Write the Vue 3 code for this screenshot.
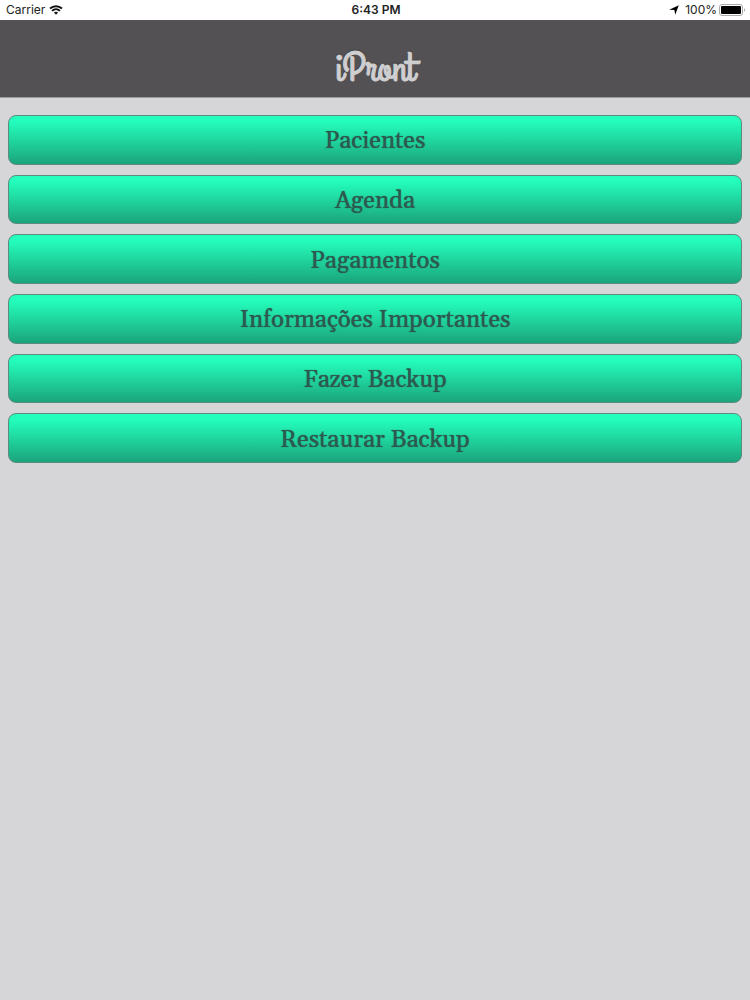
<template>
  <div class="app">
    <div class="status">
      <div class="status-left">
        <span>Carrier</span>
        <svg class="wifi" viewBox="0 0 14 10" aria-hidden="true">
          <path d="M1 3.6C4.4 .4 9.6 .4 13 3.6" />
          <path d="M3.1 5.9C5.3 3.8 8.7 3.8 10.9 5.9" />
          <path class="dot" d="M4.9 7.6C6.1 6.5 7.9 6.5 9.1 7.6L7 9.8Z" />
        </svg>
      </div>
      <span class="time">6:43 PM</span>
      <div class="status-right">
        <svg class="location" viewBox="0 0 10 10" aria-hidden="true">
          <path d="M9.8 .2L6.2 9.8L5.4 5L.2 4.8Z" />
        </svg>
        <span>100%</span>
        <svg class="battery" viewBox="0 0 27 12" aria-hidden="true">
          <rect class="case" x=".5" y=".5" width="23" height="11" rx="2.5" />
          <rect x="2" y="2" width="20" height="8" rx="1" />
          <path class="cap" d="M25 4.2C26.6 4.8 26.6 7.2 25 7.8Z" />
        </svg>
      </div>
    </div>

    <header class="header">
      <h1 class="logo">iPront</h1>
    </header>

    <nav class="menu">
      <button v-for="item in items" :key="item" type="button" class="menu-button">
        {{ item }}
      </button>
    </nav>
  </div>
</template>

<script setup>
import { ref } from 'vue'

const items = ref([
  'Pacientes',
  'Agenda',
  'Pagamentos',
  'Informações Importantes',
  'Fazer Backup',
  'Restaurar Backup'
])
</script>

<style>
body {
  margin: 0;
  background: #d6d5d7;
}
</style>

<style scoped>
.app {
  min-height: 100vh;
  background: #d6d5d7;
}

.status {
  display: grid;
  grid-template-columns: 1fr auto 1fr;
  align-items: center;
  height: 20px;
  padding: 0 4px 0 6px;
  background: #fff;
  color: #222;
  font-family: Inter, "Liberation Sans", sans-serif;
  font-size: 12px;
  line-height: 20px;
}

.status-left,
.status-right {
  display: flex;
  align-items: center;
}

.status-left {
  gap: 4px;
}

.status-right {
  justify-content: flex-end;
  gap: 2px;
}

.time {
  font-weight: 600;
}

.wifi {
  width: 14px;
  height: 10px;
  fill: none;
  stroke: #111;
  stroke-width: 2;
}

.wifi .dot {
  fill: #111;
  stroke: none;
}

.location {
  width: 10px;
  height: 10px;
  margin-right: 4px;
}

.battery {
  width: 27px;
  height: 12px;
}

.battery .case {
  fill: none;
  stroke: #aaa;
}

.battery .cap {
  fill: #aaa;
}

.header {
  display: flex;
  justify-content: center;
  padding: 29px 0 8px;
  background: #535153;
  border-bottom: 1px solid #9a999b;
}

.logo {
  margin: 0;
  color: #cfced0;
  font-family: "Grand Hotel", "Liberation Serif", cursive;
  font-size: 40px;
  font-weight: 400;
  line-height: 40px;
  -webkit-text-stroke: 1px #cfced0;
  text-shadow: 0 -1px 1px #222;
}

.menu {
  display: grid;
  grid-auto-rows: 1fr;
  gap: 10px;
  min-height: 348px;
  padding: 17px 8px;
}

.menu-button {
  padding: 3px 12px 0;
  border: 1px solid #5f8a7e;
  border-radius: 8px;
  background: linear-gradient(#24ffbd 10%, #1ba47b);
  color: #2c5a50;
  font-family: Gelasio, "Liberation Serif", serif;
  font-size: 24px;
  line-height: 32px;
  text-shadow: 0 0 1px #2c5a50;
  cursor: pointer;
}
</style>
